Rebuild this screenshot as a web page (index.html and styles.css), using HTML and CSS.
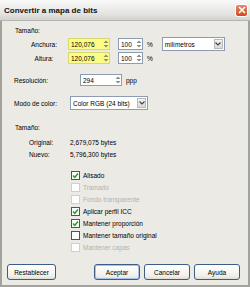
FILE: index.html
```html
<!DOCTYPE html>
<html lang="es">
<head>
  <meta charset="UTF-8">
  <title>Convertir a mapa de bits</title>
  <link rel="stylesheet" href="styles.css">
</head>
<body>
  <div class="dialog">
    <div class="titlebar">
      <span class="title">Convertir a mapa de bits</span>
      <span class="close">
        <svg width="8" height="8" viewBox="0 0 8 8"><path d="M1 1 L7 7 M7 1 L1 7" stroke="#fff" stroke-width="1.6"/></svg>
      </span>
    </div>

    <div class="content">
      <div class="heading">Tamaño:</div>

      <div class="row size-row">
        <span class="size-label">Anchura:</span>
        <div class="spin wide highlight"><span class="val">120,076</span><span class="arrows"><svg width="6" height="8" viewBox="0 0 6 8"><path d="M3 0.5 L5.5 3 L0.5 3 Z M3 7.5 L5.5 5 L0.5 5 Z" fill="#8a8a70"/></svg></span></div>
        <div class="spin pct"><span class="val">100</span><span class="arrows"><svg width="6" height="8" viewBox="0 0 6 8"><path d="M3 0.5 L5.5 3 L0.5 3 Z M3 7.5 L5.5 5 L0.5 5 Z" fill="#8a8a8a"/></svg></span></div>
        <span class="unit">%</span>
        <div class="select units"><span class="val">milímetros</span><span class="drop"><svg width="6" height="4" viewBox="0 0 6 4"><path d="M0.5 0.5 L3 3 L5.5 0.5" stroke="#444" stroke-width="1.2" fill="none"/></svg></span></div>
      </div>

      <div class="row size-row">
        <span class="size-label">Altura:</span>
        <div class="spin wide highlight"><span class="val">120,076</span><span class="arrows"><svg width="6" height="8" viewBox="0 0 6 8"><path d="M3 0.5 L5.5 3 L0.5 3 Z M3 7.5 L5.5 5 L0.5 5 Z" fill="#8a8a70"/></svg></span></div>
        <div class="spin pct"><span class="val">100</span><span class="arrows"><svg width="6" height="8" viewBox="0 0 6 8"><path d="M3 0.5 L5.5 3 L0.5 3 Z M3 7.5 L5.5 5 L0.5 5 Z" fill="#8a8a8a"/></svg></span></div>
        <span class="unit">%</span>
      </div>

      <div class="row res-row">
        <span class="main-label">Resolución:</span>
        <div class="spin wide"><span class="val">294</span><span class="arrows"><svg width="6" height="8" viewBox="0 0 6 8"><path d="M3 0.5 L5.5 3 L0.5 3 Z M3 7.5 L5.5 5 L0.5 5 Z" fill="#8a8a8a"/></svg></span></div>
        <span class="unit">ppp</span>
      </div>

      <div class="row mode-row">
        <span class="main-label">Modo de color:</span>
        <div class="select mode"><span class="val">Color RGB (24 bits)</span><span class="drop"><svg width="6" height="4" viewBox="0 0 6 4"><path d="M0.5 0.5 L3 3 L5.5 0.5" stroke="#444" stroke-width="1.2" fill="none"/></svg></span></div>
      </div>

      <div class="heading second">Tamaño:</div>
      <div class="row info-row first-info">
        <span class="info-label">Original:</span>
        <span>2,679,075 bytes</span>
      </div>
      <div class="row info-row">
        <span class="info-label">Nuevo:</span>
        <span>5,796,300 bytes</span>
      </div>

      <div class="options">
        <div class="check"><span class="box checked"><svg width="7" height="7" viewBox="0 0 7 7"><path d="M1 3.5 L2.8 5.3 L6 1.6" stroke="#21a121" stroke-width="1.5" fill="none"/></svg></span>Alisado</div>
        <div class="check disabled"><span class="box"></span>Tramado</div>
        <div class="check disabled"><span class="box"></span>Fondo transparente</div>
        <div class="check"><span class="box checked"><svg width="7" height="7" viewBox="0 0 7 7"><path d="M1 3.5 L2.8 5.3 L6 1.6" stroke="#21a121" stroke-width="1.5" fill="none"/></svg></span>Aplicar perfil ICC</div>
        <div class="check"><span class="box checked"><svg width="7" height="7" viewBox="0 0 7 7"><path d="M1 3.5 L2.8 5.3 L6 1.6" stroke="#21a121" stroke-width="1.5" fill="none"/></svg></span>Mantener proporción</div>
        <div class="check"><span class="box"></span>Mantener tamaño original</div>
        <div class="check disabled"><span class="box"></span>Mantener capas</div>
      </div>
    </div>

    <div class="buttons">
      <button class="btn reset">Restablecer</button>
      <div class="btn-group">
        <button class="btn default">Aceptar</button>
        <button class="btn">Cancelar</button>
        <button class="btn">Ayuda</button>
      </div>
    </div>
  </div>
</body>
</html>
```

FILE: styles.css
```css
body {
  margin: 0;
  width: 250px;
  height: 287px;
  overflow: hidden;
  font-family: "Liberation Sans", Arial, sans-serif;
  font-size: 6.5px;
  color: #000;
  background-color: #ebeae5;
}

.dialog {
  width: 250px;
  height: 287px;
  box-sizing: border-box;
  border-left: 2px solid #a3a39d;
  border-right: 2px solid #a3a39d;
  border-bottom: 2px solid #a3a39d;
  background-color: #ebeae5;
  display: flex;
  flex-direction: column;
}

.titlebar {
  height: 20px;
  margin: 0 -2px;
  padding: 0 2px 0 4px;
  display: flex;
  align-items: center;
  justify-content: space-between;
  background: linear-gradient(#fafafa, #e3e3e1 70%, #d2d2ce);
  border-bottom: 1px solid #b5b5b0;
}

.title {
  font-weight: bold;
  font-size: 8px;
  color: #111;
}

.close {
  width: 13px;
  height: 13px;
  box-sizing: border-box;
  border: 1px solid #fff;
  border-radius: 3px;
  background: linear-gradient(#e8866a, #d2481f);
  display: flex;
  align-items: center;
  justify-content: center;
}

.content {
  padding: 5px 0 0 10px;
  flex: 1;
}

.heading {
  height: 10px;
  line-height: 10px;
  padding-left: 3px;
}

.heading.second {
  margin-top: 13px;
}

.row {
  display: flex;
  align-items: center;
}

.size-row {
  height: 12px;
  margin-top: 2px;
}

.size-label {
  width: 46px;
  padding-left: 18px;
  box-sizing: border-box;
  text-align: center;
}

.main-label {
  width: 56px;
  padding-left: 2px;
}

.spin,
.select {
  height: 12px;
  box-sizing: border-box;
  border: 1px solid #8d9cb3;
  background-color: #fff;
  display: flex;
  align-items: center;
  justify-content: space-between;
  padding-left: 2px;
}

.spin.wide {
  width: 42px;
  margin-left: 10px;
}

.spin.highlight {
  background-color: #fbfb86;
  border-color: #d8d870;
}

.spin.pct {
  width: 25px;
  margin-left: 8px;
}

.arrows {
  width: 7px;
  height: 10px;
  display: flex;
  align-items: center;
  justify-content: center;
}

.unit {
  margin-left: 4px;
}

.select {
  padding-right: 1px;
}

.select.units {
  width: 63px;
  margin-left: 9px;
  height: 14px;
}

.drop {
  width: 9px;
  height: 10px;
  background: linear-gradient(#f4f4f4, #d9d9d6);
  border: 1px solid #b9b9b6;
  box-sizing: border-box;
  display: flex;
  align-items: center;
  justify-content: center;
}

.res-row {
  height: 12px;
  margin-top: 10px;
}

.mode-row {
  height: 14px;
  margin-top: 10px;
}

.select.mode {
  width: 78px;
  height: 14px;
}

.info-row {
  height: 12px;
}

.first-info {
  margin-top: 3px;
}

.info-label {
  width: 41px;
  padding-left: 17px;
}

.options {
  margin-top: 9px;
  padding-left: 59px;
}

.check {
  height: 12px;
  display: flex;
  align-items: center;
}

.box {
  width: 9px;
  height: 9px;
  box-sizing: border-box;
  border: 1px solid #3a5a7c;
  background-color: #fff;
  margin-right: 3px;
  display: flex;
  align-items: center;
  justify-content: center;
}

.check.disabled {
  color: #b4b3ab;
}

.check.disabled .box {
  border-color: #d2d1c9;
}

.buttons {
  display: flex;
  justify-content: space-between;
  align-items: center;
  padding: 0 8px 5px 5px;
}

.btn-group {
  display: flex;
  gap: 4px;
}

.btn {
  height: 16px;
  width: 46px;
  padding: 0;
  font-family: inherit;
  font-size: 6.5px;
  color: #000;
  border: 1px solid #3d5c86;
  border-radius: 3px;
  background: linear-gradient(#ffffff, #f0f0ea 80%, #dcdcd4);
}

.btn.reset {
  width: 49px;
}

.btn.default {
  box-shadow: inset 0 0 0 1px #a8c2ec;
}
```
